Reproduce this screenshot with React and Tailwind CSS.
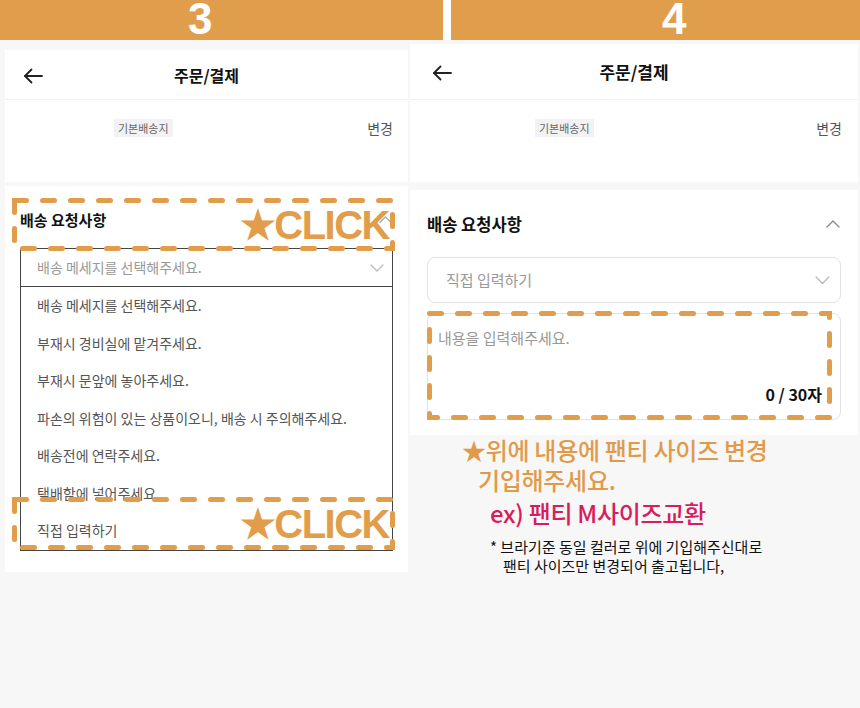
import React from 'react'

const ORANGE = '#e19d4a'

const options = [
  '배송 메세지를 선택해주세요.',
  '부재시 경비실에 맡겨주세요.',
  '부재시 문앞에 놓아주세요.',
  '파손의 위험이 있는 상품이오니, 배송 시 주의해주세요.',
  '배송전에 연락주세요.',
  '택배함에 넣어주세요.',
  '직접 입력하기',
]

const BackArrow = () => (
  <svg width="20" height="16" viewBox="0 0 20 16" fill="none" stroke="#222" strokeWidth="1.8" strokeLinecap="round" strokeLinejoin="round">
    <path d="M19 8H2" />
    <path d="M8.5 1.5 2 8l6.5 6.5" />
  </svg>
)

const Chevron = ({ up, color = '#999', size = 14 }) => (
  <svg width={size} height={size / 2 + 1} viewBox="0 0 14 8" fill="none" stroke={color} strokeWidth="1.3" strokeLinecap="round" strokeLinejoin="round">
    {up ? <path d="M1 7l6-6 6 6" /> : <path d="M1 1l6 6 6-6" />}
  </svg>
)

// dashed orange annotation frame
const DashBox = ({ w, h, className, children }) => (
  <div className={`absolute ${className}`} style={{ width: w, height: h }}>
    <svg width={w} height={h} className="absolute inset-0">
      <rect x="2.5" y="2.5" width={w - 5} height={h - 5} fill="none" stroke={ORANGE} strokeWidth="5" strokeDasharray="12 16" strokeLinecap="round" />
    </svg>
    {children}
  </div>
)

const Click = () => (
  <div className="absolute inset-0 flex items-center justify-end pr-[6px]">
    <span className="text-[40px] font-bold leading-none tracking-[-1.5px] text-[#e19d4a] font-['Liberation_Sans',sans-serif]">★CLICK</span>
  </div>
)

const TopCard = ({ headH, badgeLeft, changeRight, h, titleSize, arrowPad }) => (
  <div className="bg-white" style={{ height: h }}>
    <div className="grid grid-cols-[1fr_auto_1fr] items-center border-b border-[#f0f0f0]" style={{ height: headH }}>
      <div className="flex items-center pt-[2px]" style={{ paddingLeft: arrowPad }}><BackArrow /></div>
      <span className="font-bold text-[#111]" style={{ fontSize: titleSize }}>주문/결제</span>
      <div />
    </div>
    <div className="flex items-center justify-between h-[56px]" style={{ paddingLeft: badgeLeft, paddingRight: changeRight }}>
      <span className="bg-[#f2f2f4] text-[#666] text-[11px] px-[4px] leading-[18px]">기본배송지</span>
      <span className="text-[14px] text-[#555]">변경</span>
    </div>
  </div>
)

export default function App() {
  return (
    <div className="w-[860px] h-[708px] overflow-hidden bg-[#f7f7f7] font-['Noto_Sans_CJK_KR','Noto_Sans',sans-serif]">
      {/* step bar */}
      <div className="flex h-[40px]">
        <div className="w-[443px] bg-[#e09e4c] pl-[188px]">
          <span className="text-[44px] font-bold text-white leading-[38px] font-['Liberation_Sans',sans-serif]">3</span>
        </div>
        <div className="w-[8px] bg-white" />
        <div className="flex-1 bg-[#e09e4c] pl-[211px]">
          <span className="text-[44px] font-bold text-white leading-[38px] font-['Liberation_Sans',sans-serif]">4</span>
        </div>
      </div>

      <div className="flex">
        {/* step 3 */}
        <div className="w-[410px] pl-[5px] pr-[2px] pt-[10px] flex flex-col gap-[4px]">
          <TopCard h={132} headH={50} badgeLeft={109} changeRight={15} titleSize={16} arrowPad={18} />

          <div className="relative bg-white h-[386px] pt-[12px] px-[15px]">
            <div className="flex items-center justify-between h-[44px]">
              <span className="text-[15px] font-bold text-[#111]">배송 요청사항</span>
              <div className="pr-[1px]"><Chevron up color="#aaa" size={13} /></div>
            </div>
            <div className="mt-[6px] border border-[#444]">
              <div className="h-[38px] flex items-center justify-between pl-[16px] pr-[8px] border-b border-[#444]">
                <span className="text-[14px] text-[#999]">배송 메세지를 선택해주세요.</span>
                <Chevron color="#bbb" />
              </div>
              {options.map((o) => (
                <div key={o} className="h-[37.5px] flex items-center pl-[16px] text-[14px] text-[#555]">{o}</div>
              ))}
            </div>

            <DashBox w={383} h={53} className="left-[7px] top-[12px]"><Click /></DashBox>
            <DashBox w={383} h={53} className="left-[7px] top-[311px]"><Click /></DashBox>
          </div>
        </div>

        {/* step 4 */}
        <div className="flex-1 pt-[4px] pr-[2px] flex flex-col">
          <TopCard h={138} headH={56} badgeLeft={125} changeRight={16} titleSize={17} arrowPad={22} />

          <div className="relative bg-white h-[245px] mt-[8px] pt-[14px] px-[17px]">
            <div className="flex items-center justify-between h-[40px]">
              <span className="text-[16.5px] font-bold text-[#111]">배송 요청사항</span>
              <div className="pr-[1px]"><Chevron up color="#888" size={14} /></div>
            </div>
            <div className="mt-[13px] h-[46px] rounded-[8px] border border-[#e2e2e2] flex items-center justify-between pl-[18px] pr-[10px]">
              <span className="text-[15px] text-[#999]">직접 입력하기</span>
              <Chevron color="#bbb" size={15} />
            </div>
            <div className="mt-[10px] h-[107px] rounded-[8px] border border-[#e2e2e2] flex flex-col justify-between pl-[10px] pr-[18px] pt-[14px] pb-[14px]">
              <span className="text-[15px] text-[#999] leading-[20px]">내용을 입력해주세요.</span>
              <span className="self-end text-[16px] font-bold text-[#111] leading-[22px]">0 / 30자</span>
            </div>

            <DashBox w={405} h={109} className="left-[17px] top-[121px]" />
          </div>

          {/* annotation */}
          <div className="pl-[52px]">
            <p className="text-[24px] leading-[30px] font-medium tracking-[-0.3px] text-[#e19a4a]">★위에 내용에 팬티 사이즈 변경</p>
            <p className="pl-[16px] text-[24px] leading-[30px] font-medium tracking-[-0.3px] text-[#e19a4a]">기입해주세요.</p>
            <p className="pl-[28px] mt-[3px] text-[24px] leading-[30px] font-medium tracking-[-0.3px] text-[#d81d5c]">ex) 팬티 M사이즈교환</p>
            <p className="pl-[28px] mt-[9px] text-[15px] leading-[19px] text-[#111]">* 브라기준 동일 컬러로 위에 기입해주신대로</p>
            <p className="pl-[41px] text-[15px] leading-[19px] text-[#111]">팬티 사이즈만 변경되어 출고됩니다,</p>
          </div>
        </div>
      </div>
    </div>
  )
}
